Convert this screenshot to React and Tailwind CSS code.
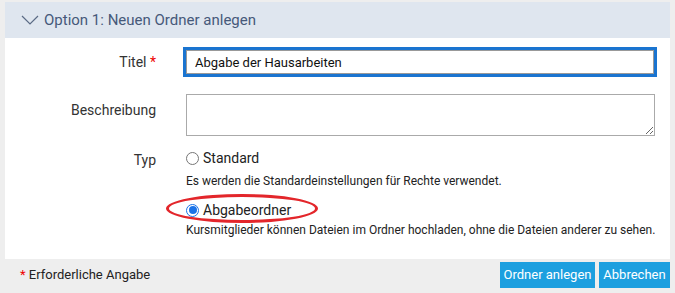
import { useState } from "react"

function Radio({ checked }) {
  return (
    <span
      className={`inline-flex h-[13px] w-[13px] shrink-0 items-center justify-center rounded-full border ${
        checked ? "border-[#1a73e8] bg-white" : "border-[#767676] bg-white"
      }`}
    >
      {checked && <span className="h-[8px] w-[8px] rounded-full bg-[#1a73e8]" />}
    </span>
  )
}

export default function App() {
  const [title, setTitle] = useState("Abgabe der Hausarbeiten")
  const [typ, setTyp] = useState("abgabe")

  return (
    <div
      className="flex h-[293px] w-[675px] flex-col bg-[#eeeeee] px-[5px] pt-[2px] text-[#222]"
      style={{ fontFamily: "Roboto, 'Noto Sans', sans-serif" }}
    >
      <div className="bg-white">
        {/* Kopfzeile */}
        <div className="flex h-[36px] items-center bg-[#dfe6ef] pl-[16px] text-[15px] text-[#46597a]">
          <svg width="18" height="10" viewBox="0 0 18 10" className="mr-[5px]">
            <path d="M1 1 L9 9 L17 1" fill="none" stroke="#5b6b85" strokeWidth="1.2" />
          </svg>
          Option 1: Neuen Ordner anlegen
        </div>

        <div className="pb-[21px] pt-[9px]">
          {/* Titel */}
          <div className="flex items-center">
            <label className="w-[151px] text-right text-[14px] text-[#333]">
              Titel <span className="text-[#e00]">*</span>
            </label>
            <div className="ml-[27px] w-[474px] border-[3px] border-[#1a74d0]">
              <input
                value={title}
                onChange={e => setTitle(e.target.value)}
                className="block h-[24px] w-full border border-[#999] px-[8px] text-[13px] text-[#111] outline-none"
              />
            </div>
          </div>

          {/* Beschreibung */}
          <div className="mt-[17px] flex">
            <label className="w-[151px] pt-[6px] text-right text-[14px] text-[#333]">Beschreibung</label>
            <textarea className="ml-[30px] h-[42px] w-[469px] border border-[#aaa] text-[13px] outline-none" />
          </div>

          {/* Typ */}
          <div className="mt-[12px] flex">
            <label className="w-[151px] pt-[2px] text-right text-[14px] text-[#333]">Typ</label>
            <div className="relative ml-[30px]">
              <div className="flex h-[20px] cursor-pointer items-center gap-[4px] text-[14px]" onClick={() => setTyp("standard")}>
                <Radio checked={typ === "standard"} />
                Standard
              </div>
              <div className="mt-[5px] h-[16px] text-[12px] leading-[16px] text-[#222]">
                Es werden die Standardeinstellungen für Rechte verwendet.
              </div>
              <div className="mt-[11px] flex h-[20px] cursor-pointer items-center gap-[4px] text-[14px]" onClick={() => setTyp("abgabe")}>
                <Radio checked={typ === "abgabe"} />
                Abgabeordner
              </div>
              <div className="mt-[2px] h-[16px] text-[12px] leading-[16px] text-[#222]">
                Kursmitglieder können Dateien im Ordner hochladen, ohne die Dateien anderer zu sehen.
              </div>
              {/* rote Markierung */}
              <div className="pointer-events-none absolute left-[-20px] top-[46px] h-[29px] w-[152px] rounded-[50%] border-[3px] border-[#e3262b]" />
            </div>
          </div>
        </div>
      </div>

      {/* Fußzeile */}
      <div className="flex flex-1 items-center justify-between pb-[2px]">
        <div className="pl-[15px] text-[13px] text-[#222]">
          <span className="text-[#e00]">*</span> Erforderliche Angabe
        </div>
        <div className="flex gap-[4px]">
          <button className="h-[26px] w-[95px] bg-[#1c9fdf] text-[13px] text-white">Ordner anlegen</button>
          <button className="h-[26px] w-[71px] bg-[#1c9fdf] text-[13px] text-white">Abbrechen</button>
        </div>
      </div>
    </div>
  )
}
